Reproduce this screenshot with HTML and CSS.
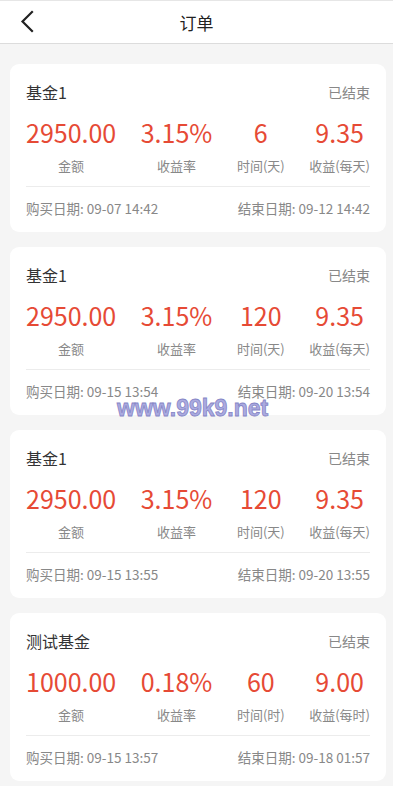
FILE: index.html
```html
<!DOCTYPE html>
<html lang="zh">
<head>
<meta charset="utf-8">
<meta name="viewport" content="width=device-width, initial-scale=1">
<link rel="stylesheet" href="styles.css">
</head>
<body>
<header class="nav">
  <span class="back"><svg width="14" height="24" viewBox="0 0 14 24"><path d="M12 2 L2.5 11.5 L12 21" fill="none" stroke="#222" stroke-width="2.2" stroke-linecap="square"/></svg></span>
  <h1 class="title">订单</h1>
</header>
<main class="list">
  <section class="card">
    <div class="card-head"><span class="name">基金1</span><span class="status">已结束</span></div>
    <div class="stats">
      <div class="stat"><div class="val">2950.00</div><div class="lbl">金额</div></div>
      <div class="stat"><div class="val">3.15%</div><div class="lbl">收益率</div></div>
      <div class="stat"><div class="val">6</div><div class="lbl">时间(天)</div></div>
      <div class="stat"><div class="val">9.35</div><div class="lbl">收益(每天)</div></div>
    </div>
    <div class="dates"><span>购买日期: 09-07 14:42</span><span>结束日期: 09-12 14:42</span></div>
  </section>
  <section class="card">
    <div class="card-head"><span class="name">基金1</span><span class="status">已结束</span></div>
    <div class="stats">
      <div class="stat"><div class="val">2950.00</div><div class="lbl">金额</div></div>
      <div class="stat"><div class="val">3.15%</div><div class="lbl">收益率</div></div>
      <div class="stat"><div class="val">120</div><div class="lbl">时间(天)</div></div>
      <div class="stat"><div class="val">9.35</div><div class="lbl">收益(每天)</div></div>
    </div>
    <div class="dates"><span>购买日期: 09-15 13:54</span><span>结束日期: 09-20 13:54</span></div>
    <div class="watermark">www.99k9.net</div>
  </section>
  <section class="card">
    <div class="card-head"><span class="name">基金1</span><span class="status">已结束</span></div>
    <div class="stats">
      <div class="stat"><div class="val">2950.00</div><div class="lbl">金额</div></div>
      <div class="stat"><div class="val">3.15%</div><div class="lbl">收益率</div></div>
      <div class="stat"><div class="val">120</div><div class="lbl">时间(天)</div></div>
      <div class="stat"><div class="val">9.35</div><div class="lbl">收益(每天)</div></div>
    </div>
    <div class="dates"><span>购买日期: 09-15 13:55</span><span>结束日期: 09-20 13:55</span></div>
  </section>
  <section class="card">
    <div class="card-head"><span class="name">测试基金</span><span class="status">已结束</span></div>
    <div class="stats">
      <div class="stat"><div class="val">1000.00</div><div class="lbl">金额</div></div>
      <div class="stat"><div class="val">0.18%</div><div class="lbl">收益率</div></div>
      <div class="stat"><div class="val">60</div><div class="lbl">时间(时)</div></div>
      <div class="stat"><div class="val">9.00</div><div class="lbl">收益(每时)</div></div>
    </div>
    <div class="dates"><span>购买日期: 09-15 13:57</span><span>结束日期: 09-18 01:57</span></div>
  </section>
</main>
</body>
</html>
```
FILE: styles.css
```css
* { box-sizing: border-box; }
html, body { margin: 0; padding: 0; }
body {
  background: #f5f5f5;
  font-family: "Noto Sans CJK SC", "Noto Sans", sans-serif;
  color: #333;
  width: 393px;
  overflow: hidden;
}
.nav {
  position: relative;
  height: 44px;
  background: #fff;
  border-top: 1px solid #e6e6e6;
  border-bottom: 1px solid #dcdcdc;
  display: flex;
  align-items: center;
  justify-content: center;
}
.back {
  position: absolute;
  left: 20px;
  top: 9px;
  display: flex;
}
.title {
  margin: 0;
  font-size: 17px;
  font-weight: 400;
  color: #222;
}
.list {
  padding: 20px 7px 10px 10px;
  display: flex;
  flex-direction: column;
  gap: 15px;
}
.card {
  position: relative;
  background: #fff;
  border-radius: 9px;
  padding: 16px 16px 15px;
  height: 168px;
}
.card-head {
  display: flex;
  justify-content: space-between;
  align-items: center;
  height: 24px;
}
.name { font-size: 16px; color: #333; }
.status { font-size: 14px; color: #888; }
.stats {
  margin-top: 12px;
  display: flex;
  justify-content: space-between;
}
.stat { text-align: center; white-space: nowrap; }
.val {
  font-size: 25px;
  line-height: 32px;
  color: #e64a35;
  font-weight: 400;
}
.lbl {
  margin-top: 9px;
  font-size: 13px;
  line-height: 18px;
  color: #888;
}
.dates {
  margin-top: 11px;
  border-top: 1px solid #ececec;
  padding-top: 12px;
  display: flex;
  justify-content: space-between;
  font-size: 13.5px;
  line-height: 18px;
  color: #888;
}
.watermark {
  position: absolute;
  left: 107px;
  top: 148px;
  font-family: "Liberation Sans", Arial, sans-serif;
  font-weight: 700;
  font-size: 23px;
  line-height: 26px;
  color: #ababe0;
  -webkit-text-stroke: 0.8px #8585c6;
  z-index: 2;
}
```
